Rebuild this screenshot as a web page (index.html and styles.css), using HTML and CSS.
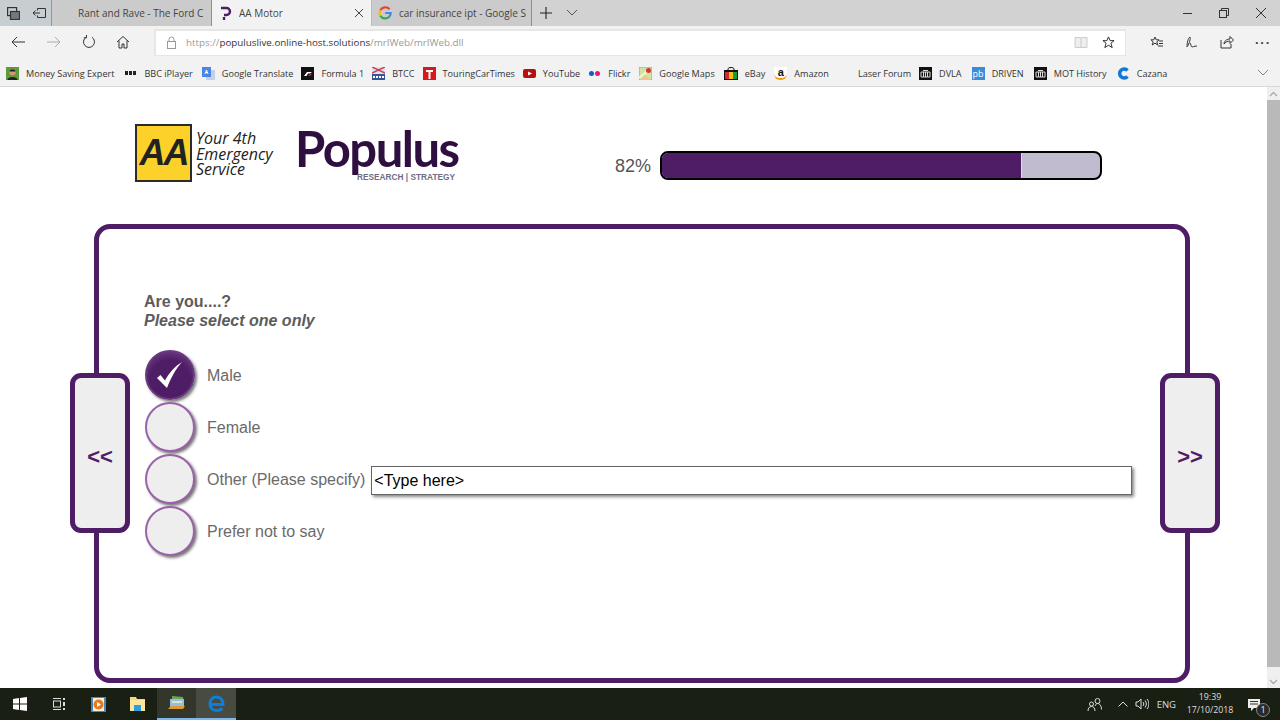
FILE: index.html
```html
<!DOCTYPE html>
<html lang="en">
<head>
    <meta charset="UTF-8">
    <meta name="viewport" content="width=device-width, initial-scale=1.0">
    <title>AA Motor</title>
    <link rel="stylesheet" href="styles.css">
</head>
<body>
    <!-- Browser tabs -->
    <div class="tab-bar">
        <div class="tab-tools">
            <svg width="13" height="13" viewBox="0 0 13 13" fill="none" stroke="#333" stroke-width="1.2"><rect x=".6" y=".6" width="9" height="8"/><rect x="3.500" y="4.500" width="9" height="8" fill="#777"/></svg>
            <svg width="13" height="11" viewBox="0 0 13 11" fill="none" stroke="#333"><path d="M4.500 2.500V.5h8v9h-8v-2M0 5h7M2.500 2.500 0 5l2.500 2.500"/></svg>
        </div>
        <div class="tab"><span class="tab-title tab-title-first">Rant and Rave - The Ford C</span></div>
        <div class="tab tab-active">
            <svg class="tab-icon" width="16" height="16" viewBox="0 0 16 16" fill="none" stroke="#4f1d66" stroke-width="2.400"><path d="M3 3h5.500a3.500 3.500 0 0 1 0 7H6"/><path d="M6 12v3"/></svg>
            <span class="tab-title">AA Motor</span>
            <svg class="tab-close" width="10" height="10" viewBox="0 0 10 10" stroke="#444" stroke-width="1"><path d="M1 1l8 8M9 1l-8 8"/></svg>
        </div>
        <div class="tab">
            <svg class="tab-icon" width="14" height="14" viewBox="0 0 14 14" fill="none" stroke-width="2.200"><path d="M11.600 3.200A5.700 5.700 0 0 0 2.300 4.300" stroke="#e94235"/><path d="M2.300 4.300a5.700 5.700 0 0 0 0 5.400" stroke="#fabb05"/><path d="M2.300 9.700a5.700 5.700 0 0 0 9 1" stroke="#34a853"/><path d="M11.300 10.700A5.700 5.700 0 0 0 12.700 7H7.200" stroke="#4285f4"/></svg>
            <span class="tab-title">car insurance ipt - Google S</span>
        </div>
        <svg class="tab-plus" width="14" height="14" viewBox="0 0 14 14" stroke="#222" stroke-width="1.100"><path d="M7 1v12M1 7h12"/></svg>
        <svg class="tab-more" width="12" height="8" viewBox="0 0 12 8" fill="none" stroke="#555"><path d="M1 1l5 5 5-5"/></svg>
        <div class="window-controls">
            <svg width="12" height="12" viewBox="0 0 12 12" stroke="#333"><path d="M2 6.500h9"/></svg>
            <svg width="12" height="12" viewBox="0 0 12 12" fill="none" stroke="#333"><rect x="1.500" y="3.500" width="7" height="7"/><path d="M3.500 3.500v-2h7v7h-2"/></svg>
            <svg width="12" height="12" viewBox="0 0 12 12" stroke="#333"><path d="M1 1l10 10M11 1L1 11"/></svg>
        </div>
    </div>

    <!-- Address bar -->
    <div class="nav-bar">
        <div class="nav-buttons">
            <svg width="16" height="14" viewBox="0 0 16 14" fill="none" stroke="#333"><path d="M15 7H2M7 2 2 7l5 5"/></svg>
            <svg width="16" height="14" viewBox="0 0 16 14" fill="none" stroke="#aaa"><path d="M1 7h13M9 2l5 5-5 5"/></svg>
            <svg width="14" height="14" viewBox="0 0 14 14" fill="none" stroke="#333"><path d="M4 2.300a5.500 5.500 0 1 0 6 0"/><path d="M4.500 0v2.800H1.800"/></svg>
            <svg width="14" height="14" viewBox="0 0 14 14" fill="none" stroke="#333"><path d="M1 7l6-5.500L13 7M3 5.500V13h3V9h2v4h3V5.500"/></svg>
        </div>
        <div class="address">
            <svg class="lock" width="11" height="13" viewBox="0 0 11 13" fill="none" stroke="#999"><rect x="1.500" y="5.500" width="8" height="7"/><path d="M3 5.500V3.500a2.500 2.500 0 0 1 5 0v2"/></svg>
            <span class="url"><span class="url-dim">https://</span>populuslive.online-host.solutions<span class="url-dim">/mrIWeb/mrIWeb.dll</span></span>
            <svg class="read-icon" width="14" height="13" viewBox="0 0 14 13" fill="#eee" stroke="#ccc"><path d="M1 1.500h5.500l.5 1 .5-1H13v10H1z"/><path d="M7 2.500v9"/></svg>
            <svg class="star-icon" width="13" height="13" viewBox="0 0 14 14" fill="none" stroke="#222"><path d="M7 1l1.800 4H13l-3.400 2.800L11 12.500 7 10l-4 2.500 1.400-4.700L1 5h4.200z"/></svg>
        </div>
        <div class="nav-tools">
            <svg width="14" height="14" viewBox="0 0 14 14" fill="none" stroke="#333"><path d="M5 2l1.200 2.800H9L6.800 7l1 3-2.800-1.800L2.200 10l1-3L1 4.800h2.800zM9 6h4M9 8.500h4M8 11h5"/></svg>
            <svg width="14" height="14" viewBox="0 0 14 14" fill="none" stroke="#333"><path d="M2 12c0-4 1-9 3-10 1 1-1 7-2.500 9.500M5 8c1 1 1 4 2 4 1 0 2-1 5-1"/></svg>
            <svg width="14" height="14" viewBox="0 0 14 14" fill="none" stroke="#333"><path d="M1 5v8h10V9M4 9c0-3 3-5 6-5V1.500L13.500 5 10 8.500V6C8 6 5.500 7 4 9z"/></svg>
            <span class="dots">&middot;&middot;&middot;</span>
        </div>
    </div>

    <!-- Favourites -->
    <div class="fav-bar">
        <div class="fav fav-mse">
            <svg width="13" height="13" viewBox="0 0 13 13"><rect width="13" height="13" fill="#5c9a3c"/><circle cx="6.500" cy="5" r="3.200" fill="#d69a72"/><path d="M3.500 4.500C3.500 1.500 9.500 1.500 9.500 4.500z" fill="#222"/><path d="M1.500 13c0-4 10-4 10 0z" fill="#222"/></svg>
            Money Saving Expert
        </div>
        <div class="fav fav-bbc"><span class="fav-swatch swatch-bbc"><i></i><i></i><i></i></span>BBC iPlayer</div>
        <div class="fav fav-gt">
            <svg width="13" height="13" viewBox="0 0 13 13"><rect x="4" y="3" width="9" height="10" fill="#c6d0e2"/><rect width="9" height="10" fill="#4a86e8"/><path d="M3 7l1.500-4L6 7M3.500 5.500h2" stroke="#fff" fill="none"/></svg>
            Google Translate
        </div>
        <div class="fav fav-f1">
            <svg width="13" height="13" viewBox="0 0 13 13"><rect width="13" height="13" fill="#111"/><path d="M3 9l3-4h5L9 6.500H7L5.500 9z" fill="#fff"/><path d="M7 9l2-2h2L9 9z" fill="#d22"/></svg>
            Formula 1
        </div>
        <div class="fav fav-btcc">
            <svg width="13" height="13" viewBox="0 0 13 13"><rect width="13" height="13" fill="#dfe3f0"/><path d="M0 0l13 6M13 0 0 6" stroke="#d0394a" stroke-width="1.500"/><rect y="7" width="13" height="6" fill="#34549e"/><path d="M1 10h11" stroke="#fff" stroke-dasharray="2 1" stroke-width="2"/></svg>
            BTCC
        </div>
        <div class="fav fav-tct">
            <svg width="13" height="13" viewBox="0 0 13 13"><rect width="13" height="13" fill="#d41a1a"/><path d="M3 3h7v2H7.500v7h-2V5H3z" fill="#fff"/></svg>
            TouringCarTimes
        </div>
        <div class="fav fav-yt">
            <svg width="13" height="13" viewBox="0 0 13 13"><rect y="2" width="13" height="9" rx="2" fill="#b8100f"/><path d="M5 4.500l4 2-4 2z" fill="#fff"/></svg>
            YouTube
        </div>
        <div class="fav fav-flickr"><span class="fav-swatch swatch-flickr"><i></i><i></i></span>Flickr</div>
        <div class="fav fav-maps">
            <svg width="13" height="13" viewBox="0 0 13 13"><rect width="13" height="13" fill="#cfe3a8" stroke="#9ca77d"/><path d="M0 11 11 2" stroke="#f5f0d0" stroke-width="2.500"/><path d="M1 13l5-5 6 5z" fill="#e8c98a"/><circle cx="9.500" cy="3.500" r="2.500" fill="#d8342c"/></svg>
            Google Maps
        </div>
        <div class="fav fav-ebay">
            <svg width="14" height="13" viewBox="0 0 14 13"><path d="M4 4V2c0-2 6-2 6 0v2" fill="none" stroke="#111"/><rect y="3" width="14" height="10" fill="#111"/><rect x="1" y="5" width="4" height="7" fill="#d8262c"/><rect x="5" y="5" width="4" height="7" fill="#f2c20f"/><rect x="9" y="5" width="4" height="7" fill="#1a9a3c"/></svg>
            eBay
        </div>
        <div class="fav fav-amazon"><span class="fav-swatch swatch-amazon">a</span>Amazon</div>
        <div class="fav fav-laser">Laser Forum</div>
        <div class="fav fav-dvla">
            <svg width="13" height="13" viewBox="0 0 13 13"><rect width="13" height="13" fill="#111"/><path d="M2 5h9v5H2z" fill="none" stroke="#ddd"/><path d="M4.500 5v5M6.500 5v5M8.500 5v5M4 3.500h5" stroke="#ddd"/></svg>
            DVLA
        </div>
        <div class="fav fav-driven"><span class="fav-swatch swatch-pb">pb</span>DRIVEN</div>
        <div class="fav fav-mot">
            <svg width="13" height="13" viewBox="0 0 13 13"><rect width="13" height="13" fill="#111"/><path d="M2 5h9v5H2z" fill="none" stroke="#ddd"/><path d="M4.500 5v5M6.500 5v5M8.500 5v5M4 3.500h5" stroke="#ddd"/></svg>
            MOT History
        </div>
        <div class="fav fav-cazana">
            <svg width="13" height="13" viewBox="0 0 13 13" fill="none" stroke="#1278d8" stroke-width="3.500"><path d="M10.500 3.500a4.500 4.500 0 1 0 0 6"/></svg>
            Cazana
        </div>
        <svg class="fav-more" width="12" height="8" viewBox="0 0 12 8" fill="none" stroke="#888"><path d="M1 1l5 5 5-5"/></svg>
    </div>

    <div class="page">
        <div class="content">
            <div class="survey-header">
                <div class="aa-badge"><span>AA</span></div>
                <div class="aa-strap">Your 4th<br>Emergency<br>Service</div>
                <div class="populus">
                    <div class="populus-name">Populus</div>
                    <div class="populus-sub">RESEARCH | STRATEGY</div>
                </div>
                <div class="progress-label">82%</div>
                <div class="progress"><div class="progress-fill" style="width: 82%"></div></div>
            </div>

            <div class="panel">
                <button class="side-button side-prev">&lt;&lt;</button>
                <button class="side-button side-next">&gt;&gt;</button>
                <h1 class="question">Are you....?<br><em>Please select one only</em></h1>
                <div class="options">
                    <div class="option">
                        <span class="radio radio-on">
                            <svg width="30" height="30" viewBox="0 0 30 30" fill="#fff"><path d="M2 18l3.500-3 4.500 5.500C14 13 20 6 27 2 20 10 16 18 12 28z"/></svg>
                        </span>
                        <span class="option-label">Male</span>
                    </div>
                    <div class="option"><span class="radio"></span><span class="option-label">Female</span></div>
                    <div class="option">
                        <span class="radio"></span><span class="option-label">Other (Please specify)</span>
                        <div class="other-input">&lt;Type here&gt;</div>
                    </div>
                    <div class="option"><span class="radio"></span><span class="option-label">Prefer not to say</span></div>
                </div>
            </div>
        </div>
        <div class="scrollbar">
            <div class="scroll-up">
                <svg width="9" height="6" viewBox="0 0 9 6" fill="none" stroke="#aaa" stroke-width="1.300"><path d="M1 5l3.500-3.500L8 5"/></svg>
            </div>
            <div class="scroll-thumb"></div>
            <div class="scroll-down">
                <svg width="9" height="6" viewBox="0 0 9 6" fill="none" stroke="#aaa" stroke-width="1.300"><path d="M1 1l3.500 3.500L8 1"/></svg>
            </div>
        </div>
    </div>

    <!-- Windows taskbar -->
    <div class="taskbar">
        <div class="task-item">
            <svg width="14" height="14" viewBox="0 0 14 14" fill="#fff"><path d="M0 2l6-.9V6.500H0zM7 1l7-1v6.500H7zM0 7.500h6v5.400l-6-.9zM7 7.500h7V14l-7-1z"/></svg>
        </div>
        <div class="task-item">
            <svg width="14" height="14" viewBox="0 0 14 14" fill="none" stroke="#ddd"><path d="M1 1.500h8M1 12.500h8"/><rect x="1.500" y="4" width="7" height="6"/><path d="M12 1v2M12 5v4M12 11v2" stroke-width="2"/></svg>
        </div>
        <div class="task-item">
            <svg width="17" height="17" viewBox="0 0 17 17"><rect x="1" y="1" width="15" height="15" fill="#4b86b4"/><rect x="3" y="2" width="11" height="13" fill="#f5f1e4"/><circle cx="8.500" cy="8.500" r="5" fill="#e8781e"/><path d="M7 6l4 2.500L7 11z" fill="#fff"/></svg>
        </div>
        <div class="task-item">
            <svg width="17" height="16" viewBox="0 0 17 16"><path d="M1 1h6l1 2h8v12H1z" fill="#f5d77d"/><rect x="1" y="4" width="15" height="11" fill="#fbe59b"/><rect x="5" y="9" width="7" height="6" fill="#2c9ee0"/></svg>
        </div>
        <div class="task-item task-open">
            <svg width="19" height="17" viewBox="0 0 19 17"><path d="M5 1l11 1 1 9-12 1z" fill="#6fa35a"/><rect x="3" y="4" width="14" height="9" fill="#8fc1e8"/><rect x="5" y="6" width="10" height="2" fill="#e6e0c8"/><path d="M1 14l3-3h14l-2 3z" fill="#e09a2c"/></svg>
        </div>
        <div class="task-item task-current">
            <svg width="17" height="17" viewBox="0 0 17 17" fill="none" stroke="#0a7fe0" stroke-width="3"><path d="M2 9.500h13C15 5 12.500 2 8.500 2 4.500 2 2 5 2 9c0 4 3 6.500 6.500 6.500 2.500 0 4.500-.8 6-2"/></svg>
        </div>
        <div class="tray">
            <svg class="tray-people" width="16" height="15" viewBox="0 0 16 15" fill="none" stroke="#ddd"><circle cx="10.500" cy="4" r="2.500"/><circle cx="4.500" cy="7" r="2"/><path d="M1 14c0-3 1.500-4.500 3.500-4.500S8 11 8 14M8 9c.5-1.500 1.500-2.500 2.500-2.500 2 0 4 2 4 6"/></svg>
            <svg class="tray-up" width="10" height="6" viewBox="0 0 10 6" fill="none" stroke="#ddd"><path d="M.5 5.500 5 1l4.500 4.500"/></svg>
            <svg class="tray-speaker" width="14" height="12" viewBox="0 0 14 12" fill="none" stroke="#ddd"><path d="M1 4v4h2l3 3V1L3 4zM8 4c1 1 1 3 0 4M10 2.500c1.800 2 1.800 5 0 7M12 1c2.500 3 2.500 7 0 10"/></svg>
            <span class="tray-lang">ENG</span>
            <div class="tray-clock">19:39<br>17/10/2018</div>
            <div class="tray-notes">
                <svg width="14" height="13" viewBox="0 0 14 13" fill="#eee"><path d="M1 1h12v9H7l-3 3v-3H1z"/><path d="M3 3.500h8M3 6h8" stroke="#333"/></svg>
                <span class="notes-count">1</span>
            </div>
        </div>
    </div>
</body>
</html>
```

FILE: styles.css
```css
* {
    box-sizing: border-box;
}
html, body {
    height: 100%;
}
body {
    margin: 0;
    width: 1280px;
    height: 720px;
    overflow: hidden;
    display: flex;
    flex-direction: column;
    background: #fff;
    font-family: "Liberation Sans", Arial, sans-serif;
}

/* Browser tabs */
.tab-bar {
    height: 26px;
    display: flex;
    align-items: center;
    background: #d2d2d2;
    font-family: "Open Sans", sans-serif;
    font-size: 10px;
    color: #444;
}
.tab-tools {
    width: 52px;
    height: 26px;
    display: flex;
    align-items: center;
    gap: 13px;
    padding-left: 7px;
    background: #c6ced2;
    border-right: 1px solid #8f979b;
}
.tab {
    width: 160px;
    height: 26px;
    display: flex;
    align-items: center;
    padding-left: 6px;
    background: #cbcbcb;
    border-right: 1px solid #8e8e8e;
    overflow: hidden;
    white-space: nowrap;
}
.tab-active {
    background: #f2f2f2;
    border-right: 1px solid #bbb;
}
.tab-icon {
    flex: none;
    margin-right: 7px;
}
.tab-active .tab-icon {
    margin-right: 5px;
}
.tab-title {
    overflow: hidden;
    flex: 1;
    margin-right: 4px;
}
.tab-title-first {
    margin-left: 20px;
}
.tab-close {
    flex: none;
    margin-right: 7px;
}
.tab-plus {
    margin-left: 7px;
}
.tab-more {
    margin-left: 13px;
}
.window-controls {
    margin-left: auto;
    display: flex;
    gap: 25px;
    padding-right: 13px;
}

/* Address bar */
.nav-bar {
    height: 32px;
    display: flex;
    align-items: center;
    background: #f2f2f2;
}
.nav-buttons {
    width: 154px;
    display: flex;
    align-items: center;
    gap: 20px;
    padding-left: 10px;
}
.address {
    width: 972px;
    height: 27px;
    display: flex;
    align-items: center;
    background: #fff;
    border: 2px solid #e6e6e6;
    border-width: 2px 1px 1px 2px;
    padding: 0 10px;
    font-family: "Open Sans", sans-serif;
    font-size: 9.800px;
}
.lock {
    margin-right: 9px;
}
.url {
    color: #333;
    flex: 1;
}
.url-dim {
    color: #999;
}
.read-icon {
    margin-right: 14px;
}
.nav-tools {
    flex: 1;
    display: flex;
    align-items: center;
    gap: 21px;
    padding-left: 24px;
}
.dots {
    font-size: 13px;
    font-weight: bold;
    letter-spacing: 1px;
    color: #444;
}

/* Favourites */
.fav-bar {
    height: 29px;
    display: flex;
    align-items: center;
    padding: 2px 0 0 6px;
    background: #f2f2f2;
    border-bottom: 1px solid #d8d8d8;
    font-family: "Open Sans", sans-serif;
    font-size: 9.100px;
    color: #333;
    white-space: nowrap;
}
.fav {
    display: flex;
    align-items: center;
    gap: 7px;
}
.fav-swatch {
    width: 13px;
    height: 13px;
    flex: none;
    display: flex;
    align-items: center;
    justify-content: center;
}
.fav-bbc { margin-left: 10px; }
.fav-gt { margin-left: 9px; }
.fav-f1 { margin-left: 8px; }
.fav-btcc { margin-left: 8px; }
.fav-tct { margin-left: 8px; }
.fav-yt { margin-left: 8px; }
.fav-flickr { margin-left: 8px; }
.fav-maps { margin-left: 9px; }
.fav-ebay { margin-left: 9px; }
.fav-amazon { margin-left: 9px; }
.fav-laser { margin-left: 29px; }
.fav-dvla { margin-left: 8px; }
.fav-driven { margin-left: 10px; }
.fav-mot { margin-left: 10px; }
.fav-cazana { margin-left: 10px; }
.fav-more {
    margin-left: auto;
    margin-right: 11px;
}
.swatch-bbc {
    gap: 1px;
}
.swatch-bbc i {
    width: 3px;
    height: 4px;
    background: #222;
}
.swatch-flickr {
    gap: 1px;
}
.swatch-flickr i {
    width: 5px;
    height: 5px;
    border-radius: 50%;
    background: #0a5fd0;
}
.swatch-flickr i:last-child {
    background: #f4127f;
}
.swatch-amazon {
    background: #fff;
    font-family: "Liberation Sans", sans-serif;
    font-weight: bold;
    font-size: 11px;
    color: #111;
    border-bottom: 2px solid #f09a16;
    border-radius: 0 0 6px 6px;
}
.swatch-pb {
    background: #3a8bd8;
    color: #fff;
    font-size: 9px;
}

/* Page area */
.page {
    flex: 1;
    display: flex;
    min-height: 0;
}
.content {
    flex: 1;
    background: #fff;
}
.scrollbar {
    width: 13px;
    display: flex;
    flex-direction: column;
    background: #efefef;
}
.scroll-up {
    height: 13px;
    display: flex;
    align-items: center;
    justify-content: center;
}
.scroll-down {
    height: 21px;
    padding-top: 9px;
    display: flex;
    align-items: center;
    justify-content: center;
}
.scroll-thumb {
    flex: 1;
    background: #b9b9b9;
}

/* Survey header */
.survey-header {
    height: 137px;
    display: flex;
    align-items: flex-start;
    padding: 37px 0 0 135px;
}
.aa-badge {
    width: 57px;
    height: 58px;
    flex: none;
    display: flex;
    align-items: center;
    justify-content: center;
    background: #fcd22a;
    border: 2px solid #2b2b2b;
    font-size: 36px;
    font-weight: bold;
    font-style: italic;
    letter-spacing: -2px;
    color: #222;
}
.aa-strap {
    margin: 7px 0 0 4px;
    width: 99px;
    font-family: "Open Sans", sans-serif;
    font-size: 16px;
    font-style: italic;
    line-height: 15.500px;
    color: #222;
}
.populus {
    width: 162px;
    flex: none;
    margin-top: 1px;
    text-align: right;
}
.populus-name {
    padding-right: 4px;
    font-family: "Lato", sans-serif;
    font-size: 49px;
    font-weight: bold;
    line-height: 47px;
    letter-spacing: -1.500px;
    color: #2f0f40;
}
.populus-sub {
    padding-right: 2px;
    font-size: 8.300px;
    font-weight: bold;
    color: #6f6c85;
}
.progress-label {
    margin: 31px 0 0 158px;
    width: 45px;
    font-size: 18px;
    line-height: 22px;
    color: #555;
}
.progress {
    width: 442px;
    height: 29px;
    margin-top: 27px;
    border: 2px solid #000;
    border-radius: 8px;
    background: #c1bbd0;
    overflow: hidden;
}
.progress-fill {
    box-sizing: content-box;
    height: 100%;
    background: #4f1d66;
    border-right: 1px solid #ddd;
}

/* Question panel */
.panel {
    position: relative;
    width: 1096px;
    height: 459px;
    margin-left: 94px;
    padding: 63px 0 0 45px;
    border: 5px solid #4f1d66;
    border-radius: 16px;
}
.side-button {
    position: absolute;
    top: 144px;
    width: 60px;
    height: 160px;
    padding: 8px 0 0;
    background: #eee;
    border: 5px solid #4f1d66;
    border-radius: 11px;
    font-family: "Liberation Sans", sans-serif;
    font-size: 22px;
    font-weight: bold;
    color: #4f1d66;
}
.side-prev {
    left: -29px;
}
.side-next {
    right: -35px;
}
.question {
    margin: 0 0 20px;
    font-size: 16px;
    font-weight: bold;
    line-height: 19px;
    color: #5c5c5c;
}
.options {
    display: flex;
    flex-direction: column;
    gap: 2px;
    font-size: 16px;
    color: #6a6a6a;
}
.option {
    height: 50px;
    display: flex;
    align-items: center;
    margin-left: 1px;
}
.option-label {
    padding-top: 2px;
}
.radio {
    width: 50px;
    height: 50px;
    flex: none;
    margin-right: 12px;
    display: flex;
    align-items: center;
    justify-content: center;
    background: #eee;
    border: 2px solid #9a62a8;
    border-radius: 50%;
    box-shadow: 2px 2px 3px #777;
}
.radio-on {
    background: radial-gradient(circle at 50% 60%, #4f1d66 55%, #7a4c90 100%);
    border-color: #6a3a80;
}
.other-input {
    width: 761px;
    height: 29px;
    margin: 3px 0 0 6px;
    padding: 0 2px;
    display: flex;
    align-items: center;
    background: #fff;
    border: 1px solid #666;
    box-shadow: 2px 2px 3px #888;
    font-size: 16px;
    color: #000;
}

/* Taskbar */
.taskbar {
    height: 32px;
    display: flex;
    align-items: stretch;
    background: #1a1f14;
    color: #ddd;
    font-family: "Open Sans", sans-serif;
}
.task-item {
    width: 39.300px;
    display: flex;
    align-items: center;
    justify-content: center;
}
.task-open {
    background: #33372b;
    border-bottom: 2px solid #7fb8e8;
}
.task-current {
    background: #484c40;
    border-bottom: 2px solid #7fb8e8;
}
.tray {
    margin-left: auto;
    display: flex;
    align-items: center;
}
.tray-up {
    margin-left: 15px;
}
.tray-speaker {
    margin-left: 7px;
}
.tray-lang {
    margin-left: 8px;
    font-size: 9.500px;
}
.tray-clock {
    width: 62px;
    margin-left: 3px;
    text-align: center;
    font-size: 8.800px;
    line-height: 13px;
}
.tray-notes {
    position: relative;
    width: 20px;
    height: 20px;
    margin: 0 13px 0 6px;
}
.notes-count {
    position: absolute;
    right: -3px;
    bottom: -3px;
    width: 14px;
    height: 14px;
    border-radius: 50%;
    border: 1px solid #888;
    background: #2a2a2a;
    font-size: 9px;
    line-height: 12px;
    text-align: center;
    color: #eee;
}
```
